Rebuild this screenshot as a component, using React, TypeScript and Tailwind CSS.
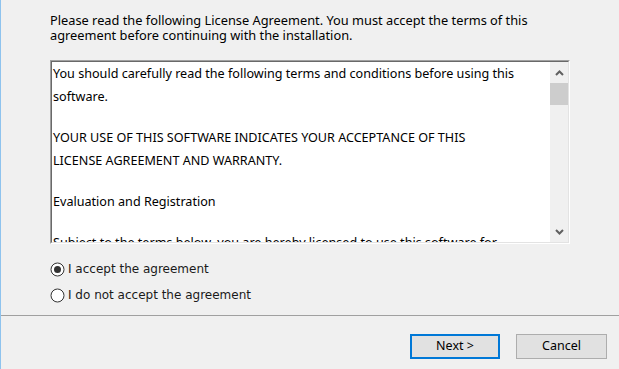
import React from "react";

function Radio({ checked }: { checked?: boolean }) {
    return (
        <svg width="15" height="15" viewBox="0 0 15 15" className="shrink-0">
            <circle cx="7.5" cy="7.5" r="6.5" fill="#ffffff" stroke="#333333" strokeWidth="1" />
            {checked && <circle cx="7.5" cy="7.5" r="3.5" fill="#333333" />}
        </svg>
    );
}

function Chevron({ up }: { up?: boolean }) {
    return (
        <svg width="9" height="6" viewBox="0 0 9 6">
            <path
                d={up ? "M1 5 L4.5 1.5 L8 5" : "M1 1 L4.5 4.5 L8 1"}
                fill="none"
                stroke="#606060"
                strokeWidth="2"
            />
        </svg>
    );
}

export default function App() {
    const ui = "font-['Noto_Sans',sans-serif]";
    return (
        <div className={`w-[619px] h-[369px] bg-[#f0f0f0] border-l border-[#8ec3ee] overflow-hidden flex flex-col ${ui} text-black`}>
            {/* Intro */}
            <p className="pl-[49px] pt-[13px] h-[60px] shrink-0 text-[12.8px] leading-[15px] whitespace-nowrap">
                Please read the following License Agreement. You must accept the terms of this
                <br />
                agreement before continuing with the installation.
            </p>

            {/* License text box */}
            <div className="ml-[49px] w-[520px] h-[184px] shrink-0 border border-t-[#a0a0a0] border-l-[#a0a0a0] border-r-white border-b-white">
                <div className="h-full border border-t-[#696969] border-l-[#696969] border-r-[#e3e3e3] border-b-[#e3e3e3] bg-white flex">
                    <div className="flex-1 overflow-hidden pl-px text-[12.6px] leading-[23px] whitespace-nowrap">
                        <p>You should carefully read the following terms and conditions before using this</p>
                        <p>software.</p>
                        <div className="h-[18px]" />
                        <p>YOUR USE OF THIS SOFTWARE INDICATES YOUR ACCEPTANCE OF THIS</p>
                        <p>LICENSE AGREEMENT AND WARRANTY.</p>
                        <div className="h-[18px]" />
                        <p>Evaluation and Registration</p>
                        <div className="h-[18px]" />
                        <p>Subject to the terms below, you are hereby licensed to use this software for</p>
                        <p>evaluation purposes without charge for a period of 30 days.</p>
                    </div>
                    {/* Scrollbar */}
                    <div className="w-[18px] bg-[#f0f0f0] flex flex-col">
                        <div className="h-[21px] flex items-center justify-center">
                            <Chevron up />
                        </div>
                        <div className="h-[22px] bg-[#cdcdcd]" />
                        <div className="flex-1" />
                        <div className="h-[21px] flex items-center justify-center">
                            <Chevron />
                        </div>
                    </div>
                </div>
            </div>

            {/* Choices */}
            <div className="pl-[49px] pt-[12px] flex flex-col shrink-0 font-['DejaVu_Sans',sans-serif] text-[12px] text-[#1a1a1a]">
                <label className="h-[26px] flex items-center gap-[3px]">
                    <Radio checked />
                    <span>I accept the agreement</span>
                </label>
                <label className="h-[26px] flex items-center gap-[3px]">
                    <Radio />
                    <span>I do not accept the agreement</span>
                </label>
            </div>

            {/* Footer */}
            <div className="mt-[7px] border-t border-[#a0a0a0] flex-1 flex justify-end items-start pt-[18px] pr-[12px] gap-[16px] text-[12.5px]">
                <button className="w-[90px] h-[25px] bg-[#e1e1e1] border-2 border-[#0078d7] leading-none">
                    Next &gt;
                </button>
                <button className="w-[91px] h-[25px] bg-[#e1e1e1] border border-[#adadad] leading-none">
                    Cancel
                </button>
            </div>
        </div>
    );
}
